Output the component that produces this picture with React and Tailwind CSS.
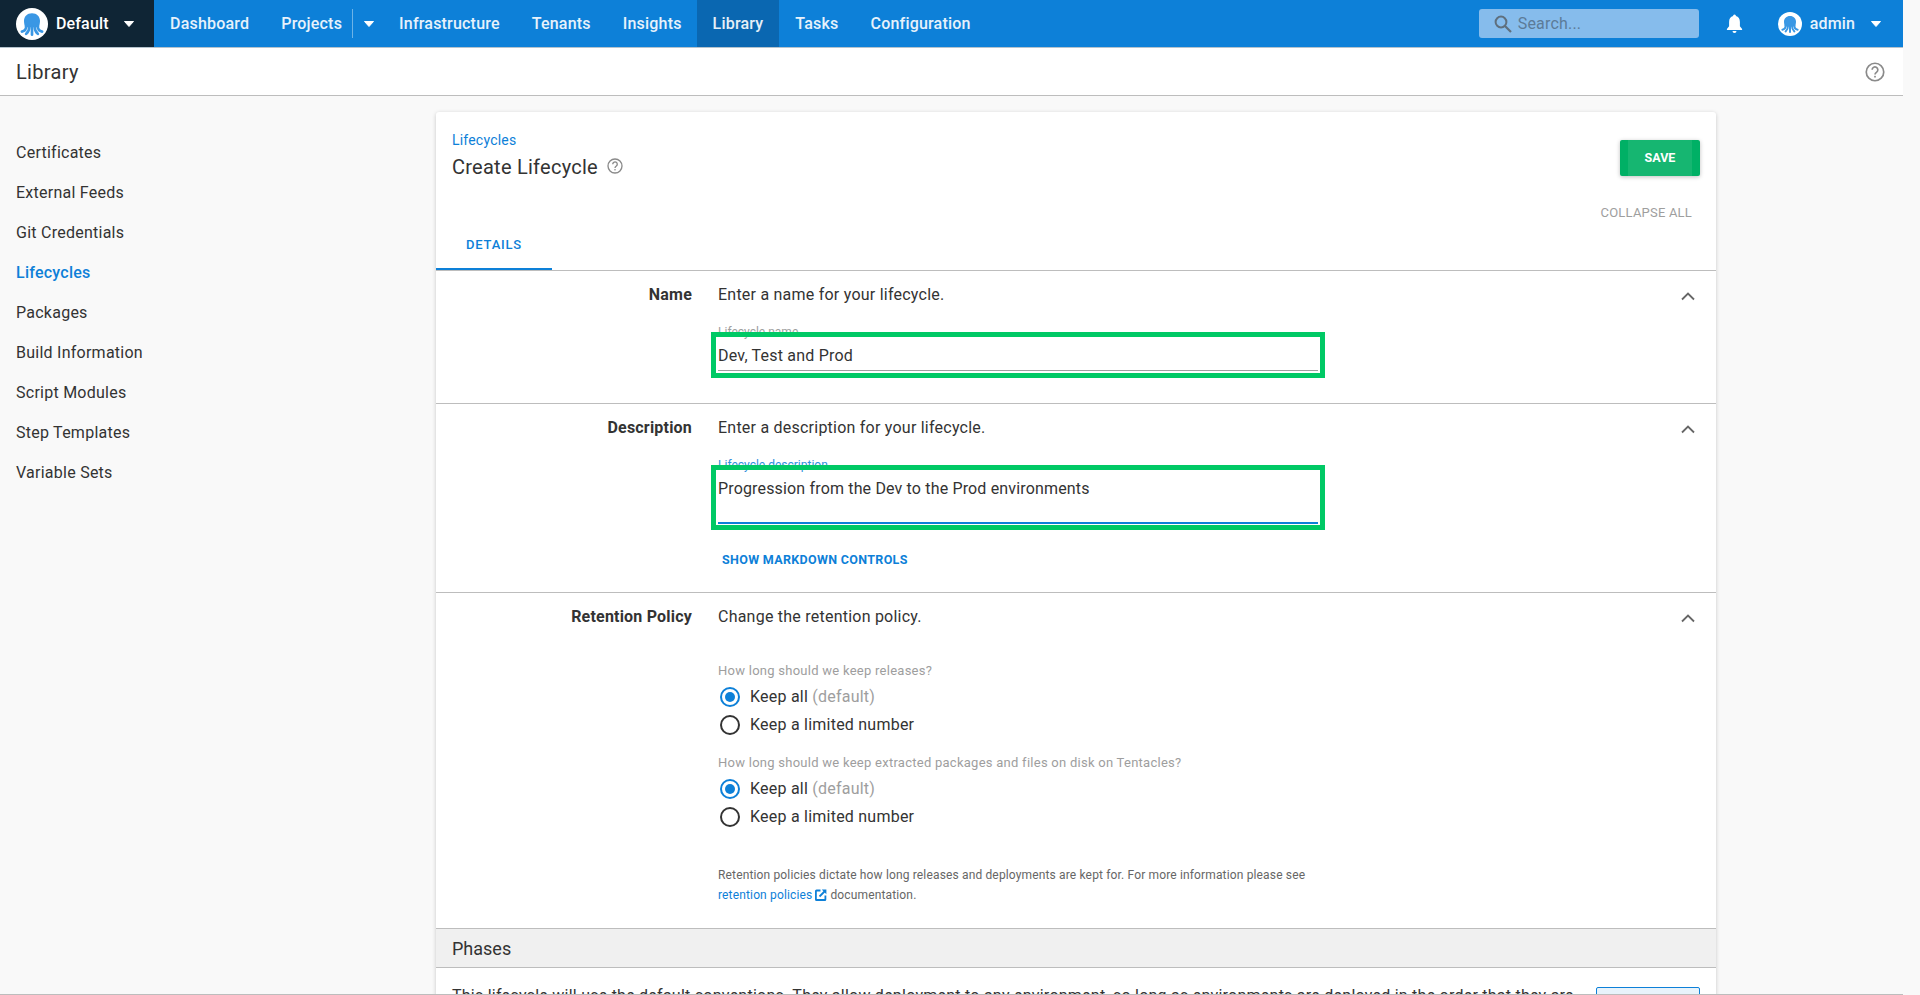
function Logo({ className }) {
  return (
    <svg viewBox="0 0 24 24" className={className}>
      <circle cx="12" cy="12" r="12" fill="#fff" />
      <path d="M12 4c3.600 0 6 2.500 6 5.800 0 2-.6 3.200-.6 4.700H6.600c0-1.500-.6-2.700-.6-4.700C6 6.500 8.400 4 12 4z" fill="#3a97e4" />
      <g fill="none" stroke="#3a97e4" strokeWidth="2" strokeLinecap="round">
        <path d="M7.800 13c0 2.800-.8 4.300-3.400 4.700" />
        <path d="M10 14c0 2.600-.9 4-2.400 5.400" />
        <path d="M12 14v6" />
        <path d="M14 14c0 2.600.9 4 2.400 5.400" />
        <path d="M16.200 13c0 2.800.8 4.300 3.400 4.700" />
      </g>
    </svg>
  );
}

function Caret({ className = "" }) {
  return (
    <svg viewBox="0 0 10 6" className={`w-[10px] h-[6px] ${className}`}>
      <path d="M0.500 0.500h9L5 5.500z" fill="#fff" stroke="#fff" strokeLinejoin="round" />
    </svg>
  );
}

function Help({ className }) {
  return (
    <svg viewBox="0 0 24 24" className={className} fill="none">
      <circle cx="12" cy="12" r="10.500" stroke="#8a8a8a" strokeWidth="2" />
      <path d="M8.600 9.400a3.400 3.400 0 1 1 5.400 2.700c-1.200.9-2 1.500-2 3" stroke="#8a8a8a" strokeWidth="2" />
      <rect x="11" y="16.600" width="2" height="2" fill="#8a8a8a" />
    </svg>
  );
}

function Chevron() {
  return (
    <svg viewBox="0 0 14 9" className="w-[14px] h-[9px]" fill="none">
      <path d="M1 7.500l6-6 6 6" stroke="#666" strokeWidth="1.800" />
    </svg>
  );
}

function Radio({ on }) {
  return (
    <span className={`w-[20px] h-[20px] rounded-full border-2 flex items-center justify-center ${on ? "border-[#0d80d8]" : "border-[#333]"}`}>
      {on && <span className="w-[10px] h-[10px] rounded-full bg-[#0d80d8]" />}
    </span>
  );
}

function RadioRow({ on, children }) {
  return (
    <div className="h-[28px] flex items-center gap-[12px] pl-[2px] text-[16px] tracking-[0.23px] text-[#333]">
      <Radio on={on} />
      <span className="ml-[-2px]">{children}</span>
    </div>
  );
}

function NavItem({ children, active, className = "" }) {
  return (
    <div className={`h-full flex items-center px-[16px] text-[16px] tracking-[0.2px] font-[500] text-white/90 ${active ? "bg-[#0a67b1]" : ""} ${className}`}>
      {children}
    </div>
  );
}

function Section({ label, help, className = "", children }) {
  return (
    <section className={`flex border-b border-[#bdbdbd] ${className}`}>
      <div className="w-[256px] shrink-0 pt-[14px] text-right text-[16px] leading-[20px] tracking-[0.2px] font-[700] text-[#333]">{label}</div>
      <div className="ml-[26px] flex-1 pt-[14px]">
        <div className="text-[16px] leading-[20px] tracking-[0.23px] text-[#333]">{help}</div>
        {children}
      </div>
      <div className="mr-[21px] pt-[21px]"><Chevron /></div>
    </section>
  );
}

const sidebar = ["Certificates", "External Feeds", "Git Credentials", "Lifecycles", "Packages", "Build Information", "Script Modules", "Step Templates", "Variable Sets"];

export default function App() {
  return (
    <div className="h-[995px] w-full overflow-hidden bg-[#f9f9f9] font-['Roboto',sans-serif]">
      <div className="w-[1903px] h-[994px] overflow-hidden">
        <header className="h-[48px] flex items-center bg-[#0d80d8] border-b border-[#b5c3cd]">
          <div className="h-full w-[154px] bg-[#0f2535] flex items-center pl-[16px]">
            <Logo className="w-[32px] h-[32px]" />
            <span className="ml-[8px] text-[16px] tracking-[0.15px] font-[500] text-white">Default</span>
            <Caret className="ml-[15px]" />
          </div>
          <NavItem>Dashboard</NavItem>
          <NavItem className="!pr-0">Projects</NavItem>
          <div className="ml-[10px] h-[29px] w-px bg-white/40" />
          <Caret className="ml-[11px]" />
          <NavItem className="!pl-[25px]">Infrastructure</NavItem>
          <NavItem>Tenants</NavItem>
          <NavItem className="!pr-[15px]">Insights</NavItem>
          <NavItem active>Library</NavItem>
          <NavItem>Tasks</NavItem>
          <NavItem>Configuration</NavItem>
          <div className="ml-auto flex items-center">
            <div className="w-[220px] h-[29px] rounded-[3px] bg-[#86bcec] flex items-center pl-[15px]">
              <svg viewBox="0 0 18 18" className="w-[18px] h-[18px]" fill="none">
                <circle cx="7" cy="7" r="5.400" stroke="#5f6f7d" strokeWidth="2" />
                <path d="M11 11l6 6" stroke="#5f6f7d" strokeWidth="2.200" />
              </svg>
              <span className="ml-[6px] text-[16px] tracking-[0.2px] text-[#5c7b98]">Search...</span>
            </div>
            <svg viewBox="0 0 16 20" className="ml-[27px] w-[17px] h-[20px]">
              <path d="M8 0.500a1.400 1.400 0 0 1 1.400 1.600C12 2.800 13.400 5 13.400 8v4.200L15.600 15v.9H.4V15l2.200-2.800V8c0-3 1.400-5.200 4-5.900A1.400 1.400 0 0 1 8 .5z M6 17h4a2 2 0 0 1-4 0z" fill="#fff" />
            </svg>
            <Logo className="ml-[35px] w-[24px] h-[24px]" />
            <span className="ml-[8px] text-[16px] tracking-[0.15px] font-[500] text-white/90">admin</span>
            <Caret className="ml-[16px] mr-[22px]" />
          </div>
        </header>

        <div className="h-[48px] bg-white border-b border-[#bdbdbd] flex items-center justify-between pl-[16px] pr-[18px]">
          <span className="text-[20px] tracking-[0.3px] text-[#333]">Library</span>
          <Help className="w-[20px] h-[20px]" />
        </div>

        <div className="flex pt-[16px]">
          <aside className="w-[436px] shrink-0 pl-[16px] pt-[21px]">
            {sidebar.map((s) => (
              <div key={s} className={`h-[40px] flex items-center text-[16px] tracking-[0.25px] ${s === "Lifecycles" ? "text-[#0d80d8] font-[500]" : "text-[#333]"}`}>{s}</div>
            ))}
          </aside>

          <main className="w-[1280px] bg-white rounded-t-[3px] shadow-[0_1px_4px_rgba(0,0,0,0.2)]">
            <div className="relative h-[110px] px-[16px] pt-[20px]">
              <div className="text-[14px] leading-[16px] tracking-[0.2px] text-[#0d80d8]">Lifecycles</div>
              <div className="mt-[5px] flex items-center">
                <span className="text-[20px] leading-[28px] tracking-[0.25px] text-[#333]">Create Lifecycle</span>
                <Help className="ml-[9px] w-[16px] h-[16px] -mt-[2px]" />
              </div>
              <div className="absolute right-[16px] top-[28px] w-[80px] h-[36px] rounded-[2px] bg-[#16b671] border-x-[8px] border-[#00b065] shadow-[0_1px_4px_rgba(0,0,0,0.25)] flex items-center justify-center pt-[1px] text-[12.5px] font-[700] text-white">SAVE</div>
              <div className="absolute right-[24px] top-[91px] text-[13px] tracking-[0.2px] text-[#9e9e9e]">COLLAPSE ALL</div>
            </div>

            <div className="h-[49px] border-b border-[#bdbdbd]">
              <div className="w-[116px] h-[48px] border-b-2 border-[#0d80d8] flex items-center justify-center text-[13px] tracking-[0.8px] font-[500] text-[#0d80d8]">DETAILS</div>
            </div>

            <Section label="Name" help="Enter a name for your lifecycle." className="h-[133px]">
              <div className="relative mt-[20px] w-[600px]">
                <div className="text-[12px] leading-[14px] text-[#9e9e9e]">Lifecycle name</div>
                <div className="mt-[5px] h-[27px] text-[16px] leading-[24px] tracking-[0.2px] text-[#333] border-b border-[#9e9e9e]">Dev, Test and Prod</div>
                <div className="absolute left-[-7px] top-[7px] w-[614px] h-[46px] border-[5px] border-[#00c965]" />
              </div>
            </Section>

            <Section label="Description" help="Enter a description for your lifecycle." className="h-[189px]">
              <div className="relative mt-[20px] w-[600px]">
                <div className="text-[12px] leading-[14px] text-[#2e8fdd]">Lifecycle description</div>
                <div className="mt-[5px] h-[47px] text-[16px] leading-[24px] tracking-[0.16px] text-[#333] border-b-2 border-[#0d80d8]">Progression from the Dev to the Prod environments</div>
                <div className="absolute left-[-7px] top-[7px] w-[614px] h-[65px] border-[5px] border-[#00c965]" />
              </div>
              <div className="mt-[27px] ml-[4px] text-[12.5px] tracking-[0.33px] font-[700] text-[#0d80d8]">SHOW MARKDOWN CONTROLS</div>
            </Section>

            <Section label="Retention Policy" help="Change the retention policy." className="h-[336px]">
              <div className="mt-[36px] text-[13px] leading-[15px] tracking-[0.26px] text-[#9e9e9e]">How long should we keep releases?</div>
              <div className="mt-[5px]">
                <RadioRow on>Keep all <span className="text-[#9e9e9e]">(default)</span></RadioRow>
                <RadioRow>Keep a limited number</RadioRow>
              </div>
              <div className="mt-[16px] text-[13px] leading-[15px] tracking-[0.26px] text-[#9e9e9e]">How long should we keep extracted packages and files on disk on Tentacles?</div>
              <div className="mt-[5px]">
                <RadioRow on>Keep all <span className="text-[#9e9e9e]">(default)</span></RadioRow>
                <RadioRow>Keep a limited number</RadioRow>
              </div>
              <div className="mt-[34px] text-[12px] leading-[20px] tracking-[0.15px] text-[#666]">
                <div>Retention policies dictate how long releases and deployments are kept for. For more information please see</div>
                <div className="flex items-center">
                  <span className="text-[#0d80d8]">retention policies</span>
                  <svg viewBox="0 0 12 12" className="ml-[3px] w-[12px] h-[12px]" fill="none">
                    <path d="M5.500 1.500H1.500a.6.6 0 0 0-.6.6v8.300c0 .3.3.6.6.6h8.300a.6.6 0 0 0 .6-.6V6.500" stroke="#0d80d8" strokeWidth="1.800" />
                    <path d="M4.500 7.500L9.500 2.500" stroke="#0d80d8" strokeWidth="1.800" />
                    <path d="M6.800 .6h4.600v4.600z" fill="#0d80d8" />
                  </svg>
                  <span className="ml-[3px]">documentation.</span>
                </div>
              </div>
            </Section>

            <div className="h-[39px] bg-[#f0f0f0] border-b border-[#bdbdbd] flex items-center pl-[16px] pt-[1px] text-[18px] text-[#333]">Phases</div>
            <div className="flex items-start pl-[16px] pr-[16px] pt-[18px]">
              <div className="flex-1 text-[16px] leading-[20px] tracking-[0.24px] text-[#333] whitespace-nowrap">This lifecycle will use the default conventions. They allow deployment to any environment, so long as environments are deployed in the order that they are</div>
              <div className="w-[104px] h-[36px] mt-[1px] rounded-[2px] border border-[#0d80d8] bg-[#e8f3fb]" />
            </div>
          </main>
        </div>
      </div>
      <div className="w-[1903px] h-px bg-[#bdbdbd]" />
    </div>
  );
}
